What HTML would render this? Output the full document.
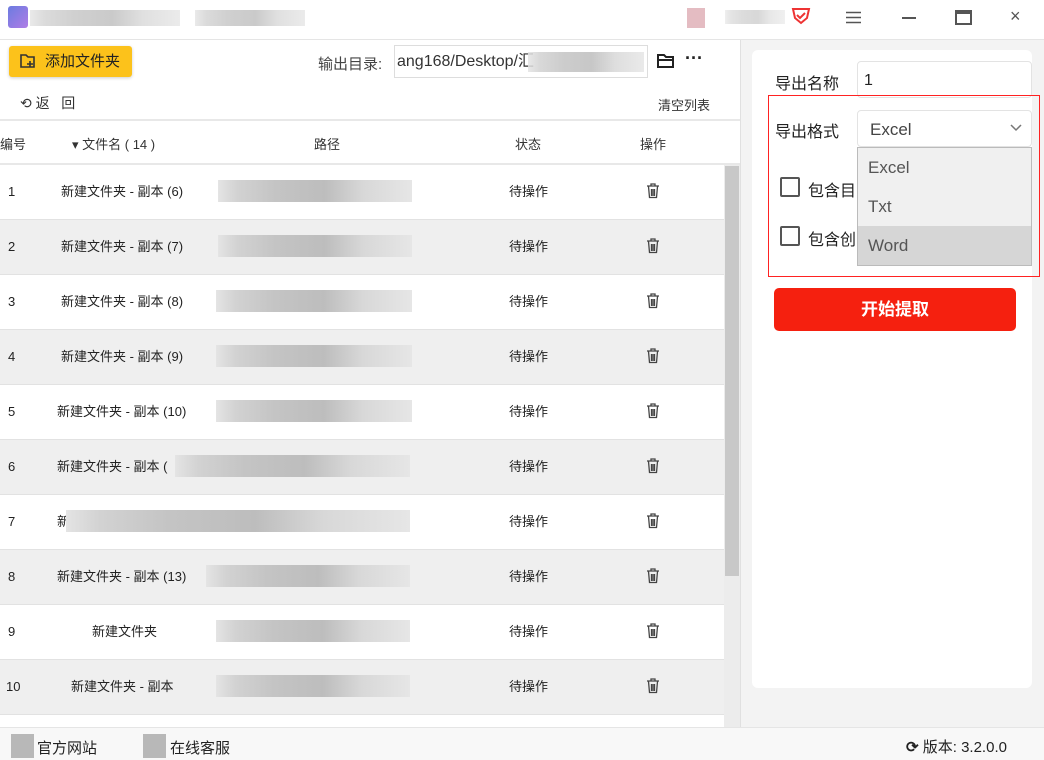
<!DOCTYPE html>
<html><head><meta charset="utf-8"><style>
*{margin:0;padding:0;box-sizing:border-box}
body{width:1044px;height:760px;overflow:hidden;background:#fff;font-family:"Liberation Sans","Noto Sans CJK SC",sans-serif;color:#333;position:relative}
.a{position:absolute}
.blur{position:absolute;background:linear-gradient(90deg,#e4e4e4 0,#d2d2d2 10%,#c4c4c4 30%,#bdbdbd 55%,#d8d8d8 75%,#e6e6e6 100%)}
.row{position:absolute;left:0;width:724px;height:55px;font-size:13px;border-bottom:1px solid #e2e2e2;color:#222}
.row.g{background:#efefef}
.row span{position:absolute;top:0;height:53px;line-height:53px}
.row svg{position:absolute;left:646px;top:18px}
</style></head><body>
<svg width="0" height="0" style="position:absolute"><defs><symbol id="tr" viewBox="0 0 14 16"><path d="M1 3h12M5 3V1h4v2M2.5 3.5l1 11h7l1-11M5.5 6v7M7 6v7M8.5 6v7" fill="none" stroke="#444" stroke-width="1.3"/></symbol></defs></svg>
<!-- title bar -->
<div class="a" style="left:8px;top:6px;width:20px;height:22px;background:linear-gradient(135deg,#6b7be0,#b07de6);border-radius:3px"></div>
<div class="blur" style="left:30px;top:10px;width:150px;height:16px;opacity:.8"></div>
<div class="blur" style="left:195px;top:10px;width:110px;height:16px;opacity:.8"></div>
<div class="a" style="left:687px;top:8px;width:18px;height:20px;background:#d8a0a8;opacity:.7"></div>
<div class="blur" style="left:725px;top:10px;width:60px;height:14px;opacity:.6"></div>
<svg class="a" style="left:790px;top:6px" width="22" height="20" viewBox="0 0 22 20"><path d="M3 3h16l-2 9-6 5-6-5z" fill="none" stroke="#e33" stroke-width="2"/><path d="M7 9l3 3 5-5" fill="none" stroke="#e33" stroke-width="2"/></svg>
<svg class="a" style="left:846px;top:11px" width="15" height="13"><path d="M0 1.5h15M0 6.5h15M0 11.5h15" stroke="#555" stroke-width="1.6"/></svg>
<div class="a" style="left:902px;top:17px;width:14px;height:2px;background:#555"></div>
<div class="a" style="left:955px;top:10px;width:17px;height:15px;border:2px solid #555;border-top-width:4px"></div>
<div class="a" style="left:1010px;top:6px;font-size:18px;color:#555">×</div>
<div class="a" style="left:0;top:39px;width:1044px;height:1px;background:#e5e5e5"></div>
<!-- toolbar -->
<div class="a" style="left:9px;top:46px;width:123px;height:31px;background:#fcc21b;border-radius:3px;box-shadow:0 1px 3px rgba(0,0,0,.2);font-size:15px;line-height:31px;padding-left:36px;color:#222">添加文件夹</div>
<svg class="a" style="left:19px;top:52px" width="18" height="18" viewBox="0 0 18 18"><path d="M2 3h5l2 2h6v10H2z" fill="none" stroke="#333" stroke-width="1.6"/><path d="M11 9v6M8 12h6" stroke="#333" stroke-width="1.6"/></svg>
<div class="a" style="left:318px;top:53px;font-size:15px;color:#444">输出目录:</div>
<div class="a" style="left:394px;top:45px;width:254px;height:33px;border:1px solid #ddd;font-size:16px;line-height:31px;padding-left:2px;color:#333;overflow:hidden;white-space:nowrap">ang168/Desktop/汇</div>
<div class="blur" style="left:528px;top:52px;width:116px;height:20px;opacity:.85"></div>
<svg class="a" style="left:656px;top:52px" width="20" height="18" viewBox="0 0 20 18"><path d="M2 3h6l2 2h7v10H2z M2 8h15" fill="none" stroke="#222" stroke-width="2"/></svg>
<div class="a" style="left:685px;top:48px;font-size:18px;font-weight:bold;color:#222">···</div>
<div class="a" style="left:20px;top:93px;font-size:14px;color:#333">⟲ 返&nbsp;&nbsp;&nbsp;回</div>
<div class="a" style="left:658px;top:95px;font-size:13px;color:#333">清空列表</div>
<div class="a" style="left:0;top:119px;width:740px;height:2px;background:#e8e8e8"></div>
<!-- header -->
<div class="a" style="left:0;top:121px;width:740px;height:43px;font-size:13px;color:#333">
<span class="a" style="left:0;top:13px">编号</span>
<span class="a" style="left:72px;top:13px">▾ 文件名 ( 14 )</span>
<span class="a" style="left:314px;top:13px">路径</span>
<span class="a" style="left:515px;top:13px">状态</span>
<span class="a" style="left:640px;top:13px">操作</span></div>
<div class="a" style="left:0;top:163px;width:740px;height:2px;background:#e8e8e8"></div>
<!-- rows -->
<div class="row" style="top:165px"><span style="left:8px">1</span><span style="left:61px">新建文件夹 - 副本 (6)</span><div class="blur" style="left:218px;top:15px;width:194px;height:22px"></div><span style="left:509px">待操作</span><svg width="14" height="16"><use href="#tr"/></svg></div>
<div class="row g" style="top:220px"><span style="left:8px">2</span><span style="left:61px">新建文件夹 - 副本 (7)</span><div class="blur" style="left:218px;top:15px;width:194px;height:22px"></div><span style="left:509px">待操作</span><svg width="14" height="16"><use href="#tr"/></svg></div>
<div class="row" style="top:275px"><span style="left:8px">3</span><span style="left:61px">新建文件夹 - 副本 (8)</span><div class="blur" style="left:216px;top:15px;width:196px;height:22px"></div><span style="left:509px">待操作</span><svg width="14" height="16"><use href="#tr"/></svg></div>
<div class="row g" style="top:330px"><span style="left:8px">4</span><span style="left:61px">新建文件夹 - 副本 (9)</span><div class="blur" style="left:216px;top:15px;width:196px;height:22px"></div><span style="left:509px">待操作</span><svg width="14" height="16"><use href="#tr"/></svg></div>
<div class="row" style="top:385px"><span style="left:8px">5</span><span style="left:57px">新建文件夹 - 副本 (10)</span><div class="blur" style="left:216px;top:15px;width:196px;height:22px"></div><span style="left:509px">待操作</span><svg width="14" height="16"><use href="#tr"/></svg></div>
<div class="row g" style="top:440px"><span style="left:8px">6</span><span style="left:57px">新建文件夹 - 副本 (</span><div class="blur" style="left:175px;top:15px;width:235px;height:22px"></div><span style="left:509px">待操作</span><svg width="14" height="16"><use href="#tr"/></svg></div>
<div class="row" style="top:495px"><span style="left:8px">7</span><span style="left:57px">新</span><div class="blur" style="left:66px;top:15px;width:344px;height:22px"></div><span style="left:509px">待操作</span><svg width="14" height="16"><use href="#tr"/></svg></div>
<div class="row g" style="top:550px"><span style="left:8px">8</span><span style="left:57px">新建文件夹 - 副本 (13)</span><div class="blur" style="left:206px;top:15px;width:204px;height:22px"></div><span style="left:509px">待操作</span><svg width="14" height="16"><use href="#tr"/></svg></div>
<div class="row" style="top:605px"><span style="left:8px">9</span><span style="left:92px">新建文件夹</span><div class="blur" style="left:216px;top:15px;width:194px;height:22px"></div><span style="left:509px">待操作</span><svg width="14" height="16"><use href="#tr"/></svg></div>
<div class="row g" style="top:660px"><span style="left:6px">10</span><span style="left:71px">新建文件夹 - 副本</span><div class="blur" style="left:216px;top:15px;width:194px;height:22px"></div><span style="left:509px">待操作</span><svg width="14" height="16"><use href="#tr"/></svg></div>
<!-- scrollbar -->
<div class="a" style="left:724px;top:165px;width:16px;height:562px;background:#ececec"></div>
<div class="a" style="left:725px;top:166px;width:14px;height:410px;background:#c8c8c8"></div>
<!-- right panel -->
<div class="a" style="left:740px;top:40px;width:304px;height:687px;background:#f3f3f3;border-left:1px solid #e0e0e0"></div>
<div class="a" style="left:752px;top:50px;width:280px;height:638px;background:#fff;border-radius:6px"></div>
<div class="a" style="left:775px;top:70px;font-size:16px;color:#222">导出名称</div>
<div class="a" style="left:857px;top:61px;width:175px;height:37px;border:1px solid #e3e3e3;border-radius:4px;font-size:16px;line-height:37px;padding-left:6px;color:#222">1</div>
<div class="a" style="left:768px;top:95px;width:272px;height:182px;border:1.5px solid #f22"></div>
<div class="a" style="left:775px;top:118px;font-size:16px;color:#222">导出格式</div>
<div class="a" style="left:857px;top:110px;width:175px;height:37px;border:1px solid #e3e3e3;border-radius:4px;font-size:17px;line-height:37px;padding-left:12px;color:#444">Excel</div>
<svg class="a" style="left:1010px;top:124px" width="12" height="8"><path d="M1 1l5 5 5-5" fill="none" stroke="#777" stroke-width="1.5"/></svg>
<div class="a" style="left:780px;top:177px;width:20px;height:20px;border:2px solid #555;border-radius:2px"></div>
<div class="a" style="left:808px;top:177px;font-size:16px;color:#222">包含目</div>
<div class="a" style="left:780px;top:226px;width:20px;height:20px;border:2px solid #555;border-radius:2px"></div>
<div class="a" style="left:808px;top:226px;font-size:16px;color:#222">包含创</div>
<div class="a" style="left:857px;top:147px;width:175px;height:119px;background:#f0f0f0;border:1px solid #bbb;font-size:17px;color:#555">
<div style="height:39px;line-height:39px;padding-left:10px">Excel</div>
<div style="height:39px;line-height:39px;padding-left:10px">Txt</div>
<div style="height:39px;line-height:39px;padding-left:10px;background:#d6d6d6">Word</div></div>
<div class="a" style="left:774px;top:288px;width:242px;height:43px;background:#f5200f;border-radius:5px;color:#fff;font-size:17px;font-weight:bold;text-align:center;line-height:43px">开始提取</div>
<!-- bottom bar -->
<div class="a" style="left:0;top:727px;width:1044px;height:33px;background:#f8f8f8;border-top:1px solid #e5e5e5"></div>
<div class="a" style="left:11px;top:734px;width:23px;height:24px;background:#b8b8b8"></div>
<div class="a" style="left:37px;top:737px;font-size:15px;color:#222">官方网站</div>
<div class="a" style="left:143px;top:734px;width:23px;height:24px;background:#b8b8b8"></div>
<div class="a" style="left:170px;top:737px;font-size:15px;color:#222">在线客服</div>
<div class="a" style="left:906px;top:736px;font-size:15px;color:#222"><b>⟳</b> 版本: 3.2.0.0</div>
</body></html>
